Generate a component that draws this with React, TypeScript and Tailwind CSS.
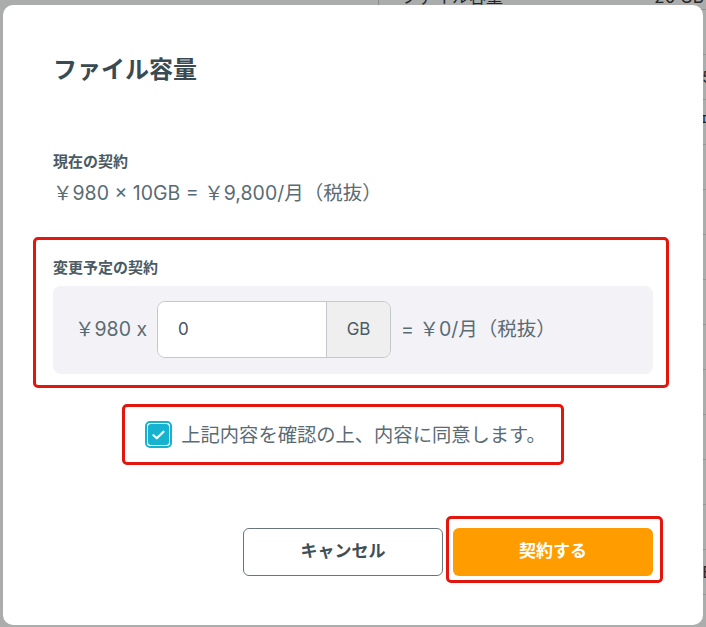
import React from "react";

const bgRows = [
  { label: "", value: "" },
  { label: "", value: "5" },
  { label: "", value: "円" },
  { label: "", value: "" },
  { label: "", value: "" },
  { label: "", value: "" },
  { label: "", value: "" },
  { label: "", value: "" },
  { label: "", value: "" },
  { label: "", value: "" },
  { label: "", value: "" },
  { label: "", value: "" },
  { label: "", value: "E" },
];

function BackgroundPage() {
  return (
    <div className="h-[627px] overflow-hidden bg-white text-[#333] font-['Inter','Noto_Sans_CJK_JP',sans-serif]">
      <div className="ml-[378px] -mt-[14px] border-l border-[#ccc]">
        <div className="flex h-[24px] items-center justify-between border-b border-[#ddd] pl-[22px] pr-[2px] text-[17px]">
          <span>ファイル容量</span>
          <span>20 GB</span>
        </div>
        {bgRows.map((r, i) => (
          <div
            key={i}
            className="flex h-[45px] items-center justify-end border-b border-[#ddd] text-[16px]"
          >
            <span className="-mr-[6px]">{r.value}</span>
          </div>
        ))}
      </div>
    </div>
  );
}

function CheckBox() {
  return (
    <div className="h-[27px] w-[27px] rounded-[5px] border-2 border-[#17b2cf] bg-white p-px">
      <div className="flex h-full w-full items-center justify-center rounded-[3px] bg-[#17b2cf]">
        <svg width="13" height="10" viewBox="0 0 13 10" fill="none">
          <path
            d="M1.5 5.2 4.8 8.3 11.5 1.7"
            stroke="white"
            strokeWidth="2.2"
            strokeLinecap="round"
            strokeLinejoin="round"
          />
        </svg>
      </div>
    </div>
  );
}

export default function App() {
  return (
    <div className="relative h-[627px] w-[706px] overflow-hidden">
      <BackgroundPage />
      <div className="absolute inset-0 bg-[rgba(10,14,16,0.34)]" />

      <div className="absolute left-[3px] top-[5px] h-[620px] w-[700px] rounded-[10px] bg-white px-[50px] pt-[49px] font-['Inter','Noto_Sans_CJK_JP',sans-serif]">
        <h1 className="text-[24px] font-bold leading-8 text-[#3a4a53]">
          ファイル容量
        </h1>

        <p className="mt-[66px] text-[15px] font-bold leading-5 text-[#4b5a63]">
          現在の契約
        </p>
        <p className="mt-[7px] text-[19.5px] leading-7 text-[#5b6b73]">
          ￥980 × 10GB = ￥9,800/月（税抜）
        </p>

        <div className="-ml-[20px] -mr-[16px] mt-[30px] rounded-[5px] border-[3px] border-[#e3160e] pb-[11px] pl-[17px] pr-[13px] pt-[18px]">
          <p className="text-[15px] font-bold leading-5 text-[#4b5a63]">
            変更予定の契約
          </p>
          <div className="mt-[8px] flex items-center rounded-lg bg-[#f3f3f7] pb-[16px] pl-[22px] pt-[15px] text-[19.5px] text-[#5b6b73]">
            <span>￥980 x</span>
            <div className="ml-[10px] flex h-[57px] w-[234px] overflow-hidden rounded-lg border border-[#c3c8cc]">
              <div className="flex w-[168px] items-center bg-white pl-[20px] text-[17px] text-[#44545c]">
                0
              </div>
              <div className="flex flex-1 items-center justify-center border-l border-[#c3c8cc] bg-[#efeff0] text-[17px] text-[#4b5a63]">
                GB
              </div>
            </div>
            <span className="ml-[10px]">= ￥0/月（税抜）</span>
          </div>
        </div>

        <div className="mt-[16px] flex justify-center pr-[20px]">
          <div className="flex h-[61px] items-center gap-[9px] rounded-[5px] border-[3px] border-[#e3160e] pl-[20px] pr-[15px]">
            <CheckBox />
            <span className="text-[19.3px] leading-7 text-[#5b6b73]">
              上記内容を確認の上、内容に同意します。
            </span>
          </div>
        </div>

        <div className="mt-[51px] flex items-start justify-end -mr-[10px]">
          <button className="mt-[12px] h-[48px] w-[200px] rounded-md border border-[#67767e] bg-white text-[17px] font-bold text-[#3f4f58]">
            キャンセル
          </button>
          <div className="ml-[3px] rounded-[5px] border-[3px] border-[#e3160e] pb-[4px] pl-[4px] pr-[7px] pt-[9px]">
            <button className="h-[48px] w-[200px] rounded-md bg-[#ff9c00] text-[17px] font-bold text-white">
              契約する
            </button>
          </div>
        </div>
      </div>
    </div>
  );
}
